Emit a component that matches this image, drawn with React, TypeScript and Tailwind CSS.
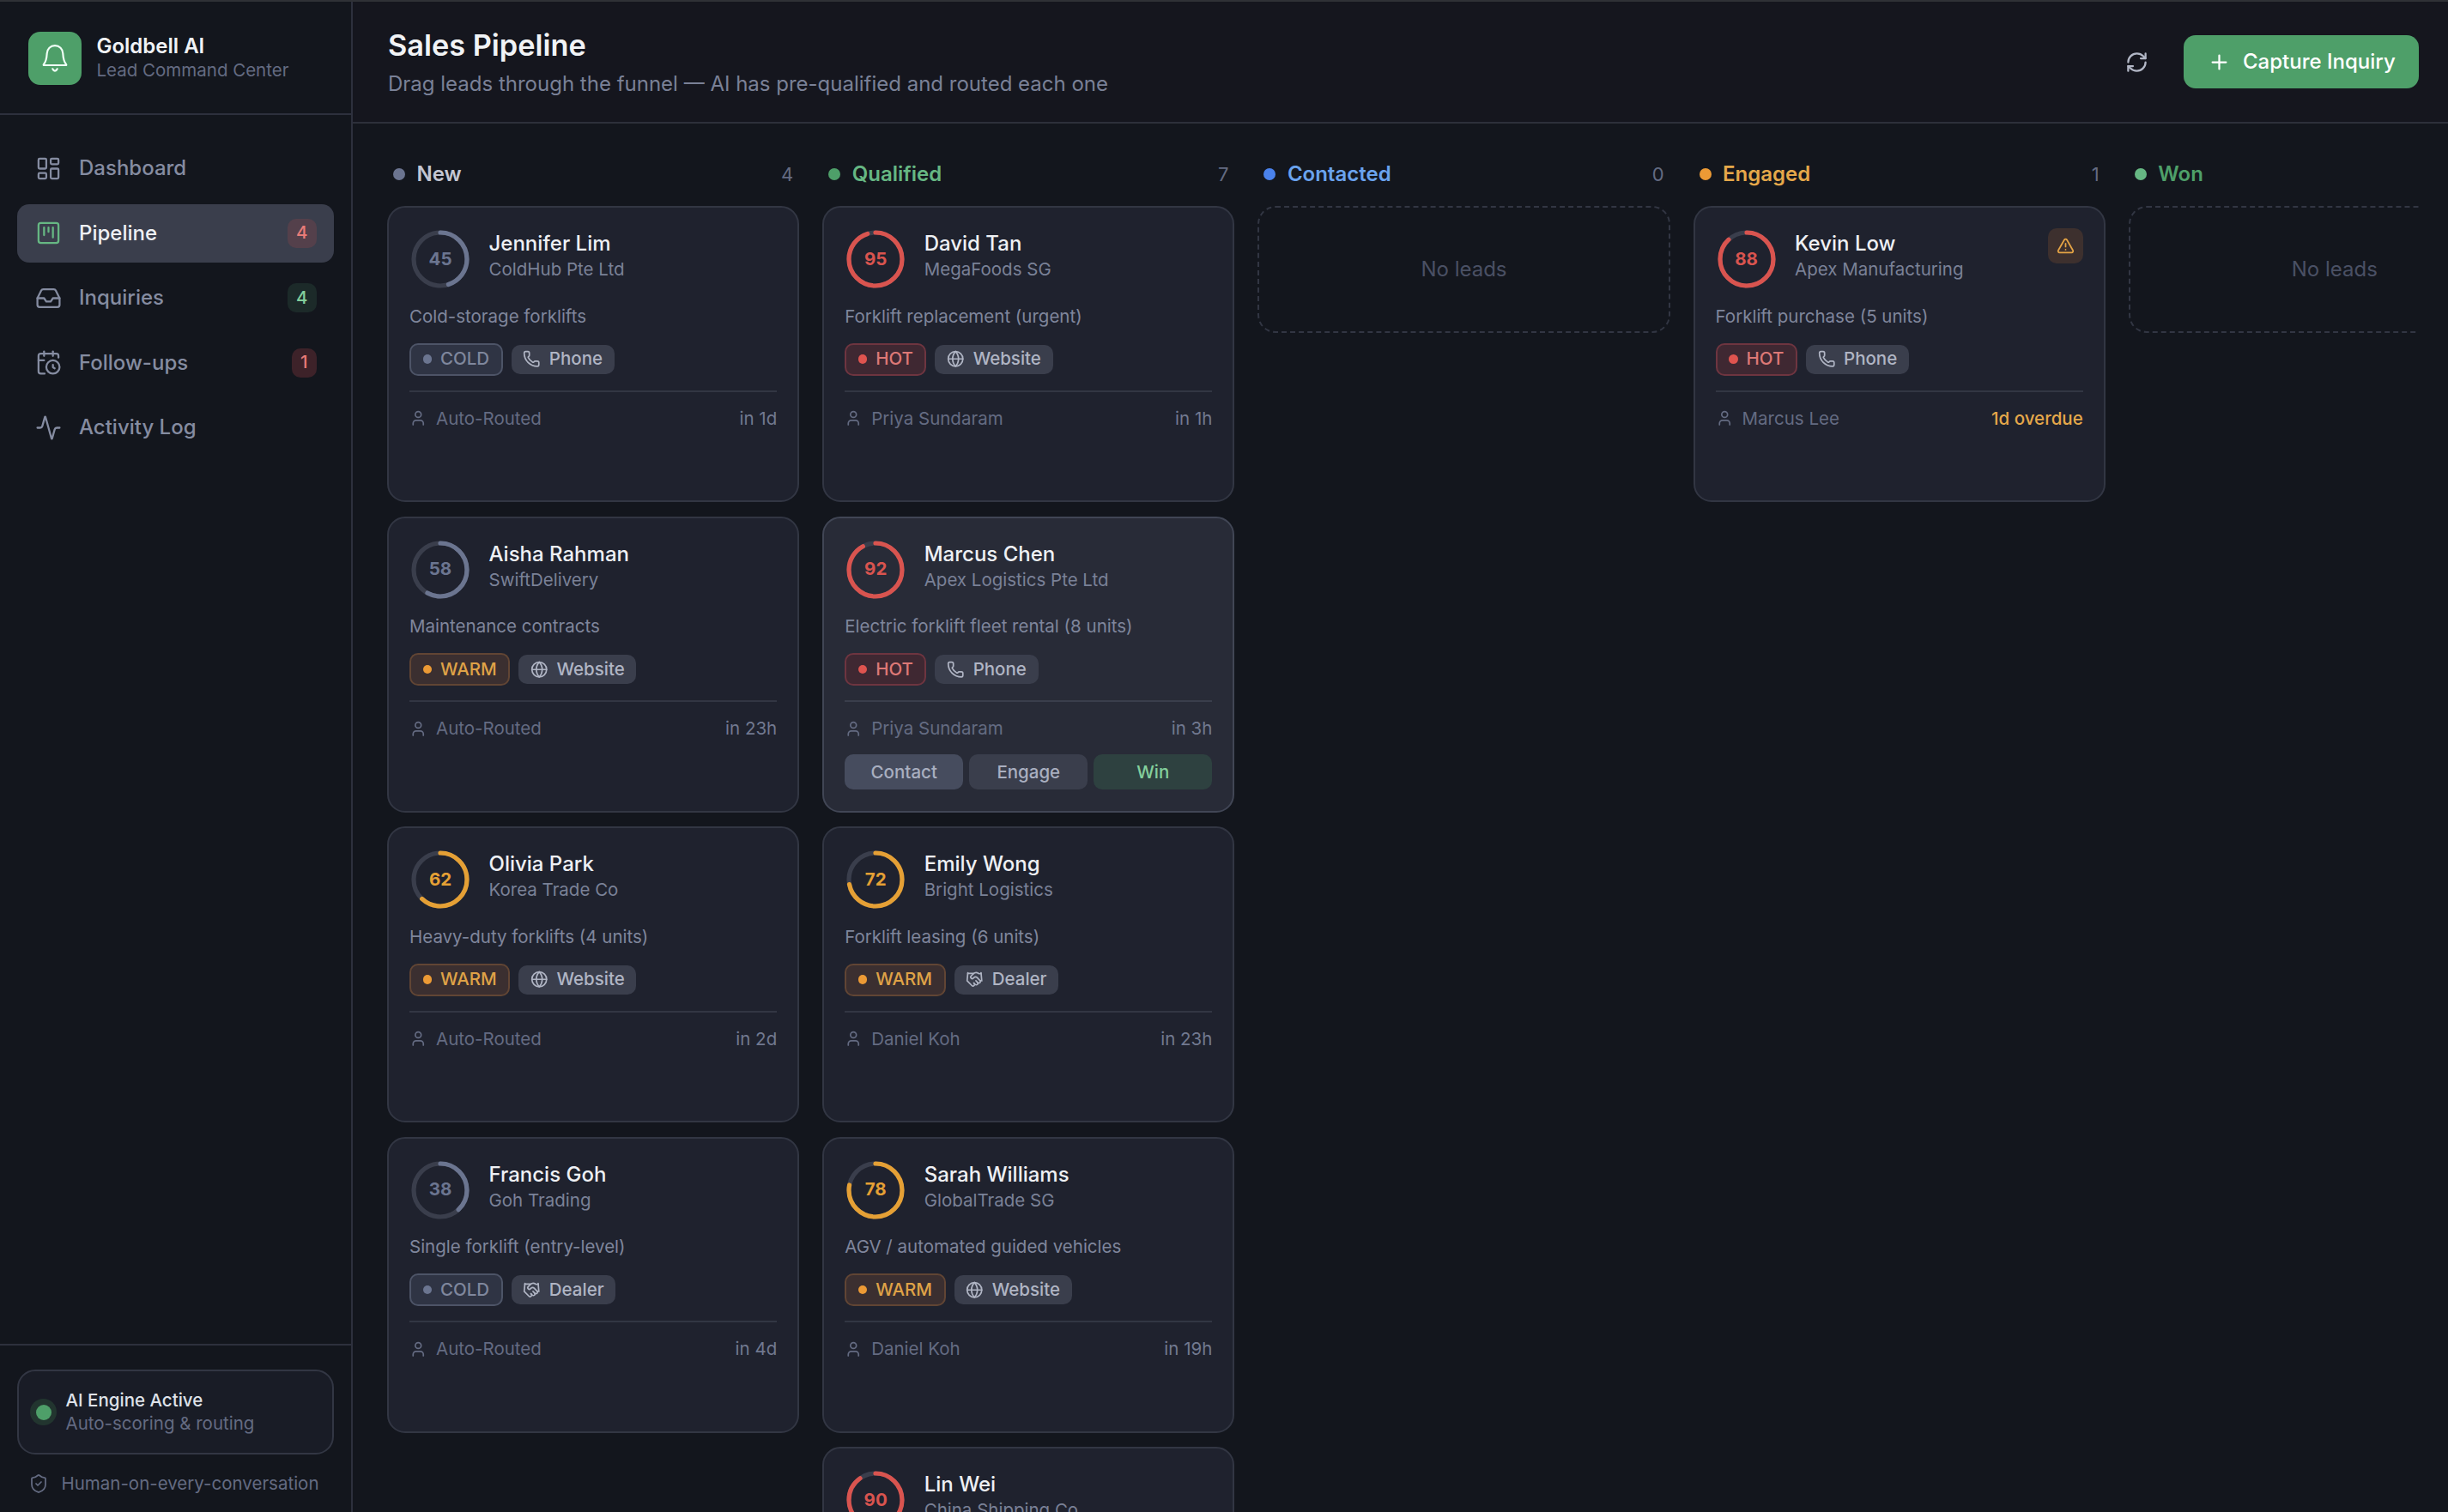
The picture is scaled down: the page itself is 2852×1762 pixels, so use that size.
import React from "react";
import { LayoutDashboard, SquareKanban, Inbox, CalendarClock, Activity, ShieldCheck, RefreshCw, Plus, TriangleAlert, User, Phone, Globe, Handshake } from "lucide-react";

type Temp = "HOT" | "WARM" | "COLD";
type Source = "Phone" | "Website" | "Dealer";
type Lead = {
  score: number;
  name: string;
  company: string;
  need: string;
  temp: Temp;
  source: Source;
  owner: string;
  due: string;
  overdue?: boolean;
  hovered?: boolean;
};

const tempStyle: Record<Temp, { badge: string; dot: string }> = {
  HOT: { badge: "border-[#6e3540] bg-[#3f2832] text-[#dd7876]", dot: "bg-[#df544f]" },
  WARM: { badge: "border-[#614534] bg-[#3b2f30] text-[#dfa247]", dot: "bg-[#ec9a35]" },
  COLD: { badge: "border-[#4d5467] bg-[#2f3444] text-[#7f879d]", dot: "bg-[#6b7590]" },
};

const sourceIcon = { Phone, Website: Globe, Dealer: Handshake };

const columns: { title: string; count: string; dot: string; text: string; leads: Lead[] }[] = [
  {
    title: "New", count: "4", dot: "bg-[#6b7490]", text: "text-[#c3c6d2]",
    leads: [
      { score: 45, name: "Jennifer Lim", company: "ColdHub Pte Ltd", need: "Cold-storage forklifts", temp: "COLD", source: "Phone", owner: "Auto-Routed", due: "in 1d" },
      { score: 58, name: "Aisha Rahman", company: "SwiftDelivery", need: "Maintenance contracts", temp: "WARM", source: "Website", owner: "Auto-Routed", due: "in 23h" },
      { score: 62, name: "Olivia Park", company: "Korea Trade Co", need: "Heavy-duty forklifts (4 units)", temp: "WARM", source: "Website", owner: "Auto-Routed", due: "in 2d" },
      { score: 38, name: "Francis Goh", company: "Goh Trading", need: "Single forklift (entry-level)", temp: "COLD", source: "Dealer", owner: "Auto-Routed", due: "in 4d" },
    ],
  },
  {
    title: "Qualified", count: "7", dot: "bg-[#4e9f69]", text: "text-[#66b783]",
    leads: [
      { score: 95, name: "David Tan", company: "MegaFoods SG", need: "Forklift replacement (urgent)", temp: "HOT", source: "Website", owner: "Priya Sundaram", due: "in 1h" },
      { score: 92, name: "Marcus Chen", company: "Apex Logistics Pte Ltd", need: "Electric forklift fleet rental (8 units)", temp: "HOT", source: "Phone", owner: "Priya Sundaram", due: "in 3h", hovered: true },
      { score: 72, name: "Emily Wong", company: "Bright Logistics", need: "Forklift leasing (6 units)", temp: "WARM", source: "Dealer", owner: "Daniel Koh", due: "in 23h" },
      { score: 78, name: "Sarah Williams", company: "GlobalTrade SG", need: "AGV / automated guided vehicles", temp: "WARM", source: "Website", owner: "Daniel Koh", due: "in 19h" },
      { score: 90, name: "Lin Wei", company: "China Shipping Co", need: "Port equipment", temp: "HOT", source: "Website", owner: "Priya Sundaram", due: "in 2h" },
    ],
  },
  { title: "Contacted", count: "0", dot: "bg-[#4a82ec]", text: "text-[#6aa3ee]", leads: [] },
  {
    title: "Engaged", count: "1", dot: "bg-[#ec9a35]", text: "text-[#e5a84a]",
    leads: [
      { score: 88, name: "Kevin Low", company: "Apex Manufacturing", need: "Forklift purchase (5 units)", temp: "HOT", source: "Phone", owner: "Marcus Lee", due: "1d overdue", overdue: true },
    ],
  },
  { title: "Won", count: "0", dot: "bg-[#66b783]", text: "text-[#4e9f69]", leads: [] },
];

function ScoreRing({ score }: { score: number }) {
  const color = score >= 80 ? "#d9544f" : score >= 60 ? "#e5a035" : "#6b7590";
  const r = 31;
  const c = 2 * Math.PI * r;
  return (
    <div className="relative grid size-[72px] shrink-0 place-items-center">
      <svg viewBox="0 0 72 72" className="absolute inset-0 size-full -rotate-90" fill="none" strokeWidth="5.2">
        <circle cx="36" cy="36" r={r} stroke="#3a3e4c" />
        <circle cx="36" cy="36" r={r} stroke={color} strokeLinecap="round" strokeDasharray={`${(c * score) / 100} ${c}`} />
      </svg>
      <span className="relative text-[20.5px] leading-none font-bold" style={{ color }}>{score}</span>
    </div>
  );
}

function LeadCard({ lead }: { lead: Lead }) {
  const Icon = sourceIcon[lead.source];
  const t = tempStyle[lead.temp];
  return (
    <article className={`flex h-[345px] shrink-0 flex-col rounded-[21px] border-2 px-[24px] pt-[24px] ${lead.hovered ? "border-[#414655] bg-[#282b37]" : "border-[#323643] bg-[#1f222e]"}`}>
      <div className="flex h-[72px] items-start">
        <ScoreRing score={lead.score} />
        <div className="ml-[20.5px] flex-1 pt-[2px]">
          <h3 className="text-[24px] leading-[31px] font-medium text-[#eef0f4]">{lead.name}</h3>
          <p className="text-[20.5px] leading-[30px] text-[#7a8197]">{lead.company}</p>
        </div>
        {lead.overdue && (
          <span className="grid size-[41px] place-items-center rounded-[10px] bg-[#3d302e] text-[#e5a445]">
            <TriangleAlert size={21} />
          </span>
        )}
      </div>
      <p className="mt-[16.5px] text-[20.5px] leading-[28px] text-[#7f869c]">{lead.need}</p>
      <div className="mt-[17px] flex h-[38px] items-center gap-[10px]">
        <span className={`flex h-[38px] items-center gap-[10px] rounded-[10px] border-2 px-[13.5px] text-[20.5px] font-medium ${t.badge}`}>
          <i className={`size-[10.5px] rounded-full ${t.dot}`} />
          {lead.temp}
        </span>
        <span className="flex h-[34px] items-center gap-[10px] rounded-[10px] bg-[#3a3e4c] px-[13.7px] text-[20.5px] font-medium text-[#b0b5c4]">
          <Icon size={20.5} />
          {lead.source}
        </span>
      </div>
      <div className={`mt-[17px] flex items-center border-t-2 pt-[16px] text-[20.5px] leading-[30px] text-[#646b82] ${lead.hovered ? "border-[#3a3e4c]" : "border-[#323643]"}`}>
        <User size={20.5} className="mr-[10.5px]" />
        <span className="flex-1">{lead.owner}</span>
        <span className={lead.overdue ? "font-medium text-[#e5a84a]" : "text-[#717990]"}>{lead.due}</span>
      </div>
      {lead.hovered && (
        <div className="mt-[15px] grid grid-cols-3 gap-[7px] text-center text-[20.5px] leading-[41px] font-medium text-[#a9afc0]">
          <button className="h-[41px] rounded-[10px] bg-[#464c5e]">Contact</button>
          <button className="h-[41px] rounded-[10px] bg-[#3a3e4c]">Engage</button>
          <button className="h-[41px] rounded-[10px] bg-[#2e4140] text-[#83cf9c]">Win</button>
        </div>
      )}
    </article>
  );
}

const nav = [
  { label: "Dashboard", Icon: LayoutDashboard },
  { label: "Pipeline", Icon: SquareKanban, active: true, badge: "4", tone: "bg-[#54404b] text-[#e87c78]" },
  { label: "Inquiries", Icon: Inbox, badge: "4", tone: "bg-[#1c2a29] text-[#83cf9c]" },
  { label: "Follow-ups", Icon: CalendarClock, badge: "1", tone: "bg-[#3d2229] text-[#e87c78]" },
  { label: "Activity Log", Icon: Activity },
];

function Sidebar() {
  return (
    <aside className="flex w-[411px] shrink-0 flex-col border-r-2 border-[#2d303d]">
      <div className="flex h-[132px] shrink-0 items-center border-b-2 border-[#2d303d] pt-px pl-[33px]">
        <div className="grid size-[62px] place-items-center rounded-[14px] bg-[#4e9f69] text-[#f0fff6]">
          <svg width="62" height="62" viewBox="0 0 62 62" fill="none" stroke="currentColor" strokeWidth="2.2" strokeLinecap="round" strokeLinejoin="round">
            <path d="M31 16.2c-5.3 0-9 3.9-9.3 9-.3 5.200-.6 9-3.700 12.700q-.8 1.100.5 1.100h25q1.300 0 .5-1.100c-3.100-3.700-3.400-7.500-3.700-12.700-.3-5.100-4-9-9.300-9z" />
            <path d="M28.300 43.300c.7 1.500 1.500 2.300 2.700 2.300s2-.8 2.700-2.300" />
          </svg>
        </div>
        <div className="ml-[17.5px]">
          <div className="text-[24px] leading-[28px] font-semibold text-[#f1f3f6]">Goldbell AI</div>
          <div className="text-[20.5px] leading-[27px] text-[#646b82]">Lead Command Center</div>
        </div>
      </div>
      <nav className="flex flex-1 flex-col gap-[7px] px-[20px] pt-[28px]">
        {nav.map(({ label, Icon, active, badge, tone }) => (
          <a key={label} className={`flex h-[68.5px] items-center rounded-[14px] px-[20.5px] text-[24px] font-medium ${active ? "bg-[#3a3e4c] text-[#eef0f4]" : "text-[#858ca1]"}`}>
            <Icon size={31} strokeWidth={1.75} className={active ? "text-[#66b783]" : ""} />
            <span className="ml-[20.500px] flex-1">{label}</span>
            {badge && <span className={`grid h-[34px] place-items-center rounded-[10px] px-[10px] text-[20.5px] font-medium ${tone}`}>{badge}</span>}
          </a>
        ))}
      </nav>
      <div className="h-[196px] shrink-0 border-t-2 border-[#2d303d] px-[20px] pt-[28px]">
        <div className="flex h-[99px] items-center rounded-[21px] border-2 border-[#323643] bg-[#191c26] pl-[13px]">
          <span className="grid size-[31px] place-items-center rounded-full bg-[#22352f]">
            <i className="size-[18px] rounded-full bg-[#4e9f69]" />
          </span>
          <div className="ml-[10.5px]">
            <div className="text-[20.5px] leading-[27px] font-medium text-[#dfe2e9]">AI Engine Active</div>
            <div className="text-[20.5px] leading-[28px] text-[#646b82]">Auto-scoring &amp; routing</div>
          </div>
        </div>
        <div className="mt-[20px] flex items-center pl-[13px] text-[20.5px] leading-[28px] text-[#646b82]">
          <ShieldCheck size={24} strokeWidth={1.75} />
          <span className="ml-[14.500px]">Human-on-every-conversation</span>
        </div>
      </div>
    </aside>
  );
}

export default function App() {
  return (
    <div className="flex h-[1762px] w-[2852px] overflow-hidden border-t-2 border-[#2f3136] bg-[#13161d] font-['Inter',sans-serif]">
      <Sidebar />
      <main className="flex min-w-0 flex-1 flex-col">
        <header className="flex h-[142px] shrink-0 items-center border-b-2 border-[#2d303a] bg-[#15161e] pr-[34px] pl-[41px]">
          <div className="flex-1 pt-[3px]">
            <h1 className="text-[34.3px] leading-[46px] font-semibold text-[#f1f3f6]">Sales Pipeline</h1>
            <p className="mt-[3px] text-[24px] leading-[38px] text-[#7a8197]">Drag leads through the funnel — AI has pre-qualified and routed each one</p>
          </div>
          <RefreshCw size={27} className="mr-[41px] text-[#b2b7c6]" />
          <button className="flex h-[62px] w-[274px] items-center rounded-[14px] bg-[#4e9f69] pl-[28px] text-[24px] font-medium text-white">
            <Plus size={27} />
            <span className="ml-[14px]">Capture Inquiry</span>
          </button>
        </header>
        <div className="mr-[34px] ml-[40px] flex flex-1 gap-[27px] overflow-hidden pt-[42px]">
          {columns.map((col) => (
            <section key={col.title} className="flex w-[480.2px] shrink-0 flex-col">
              <div className="flex h-[34px] items-center px-[7px] text-[24px]">
                <i className={`size-[14px] rounded-full ${col.dot}`} />
                <h2 className={`ml-[13.500px] flex-1 font-semibold ${col.text}`}>{col.title}</h2>
                <span className="text-[22px] text-[#646b82]">{col.count}</span>
              </div>
              <div className="mt-[20px] flex flex-col gap-[16.5px]">
                {col.leads.map((l) => <LeadCard key={l.name} lead={l} />)}
                {col.leads.length === 0 && (
                  <div className="grid h-[148px] place-items-center rounded-[21px] border-2 border-dashed border-[#323643] text-[24px] text-[#4a5064]">No leads</div>
                )}
              </div>
            </section>
          ))}
        </div>
      </main>
    </div>
  );
}
